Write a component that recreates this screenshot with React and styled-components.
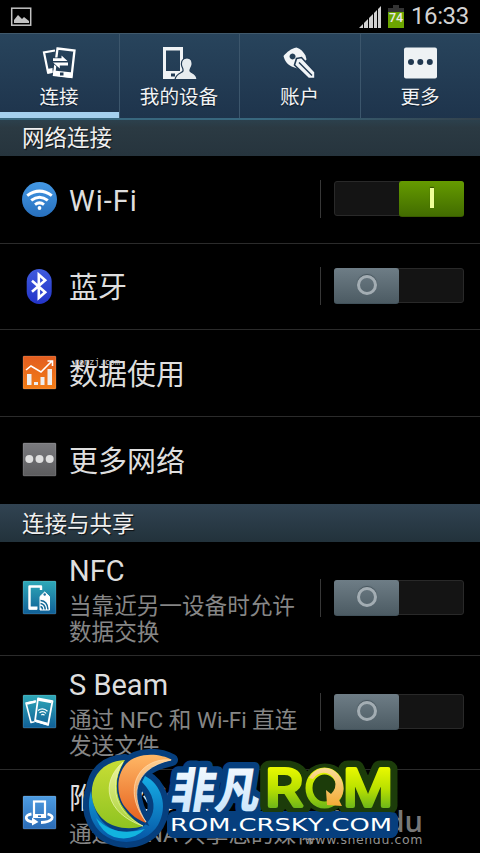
import React from 'react';
import styled, { createGlobalStyle } from 'styled-components';

const GlobalStyle = createGlobalStyle`
  * {
    box-sizing: border-box;
  }
  body {
    margin: 0;
    background: #000;
    overflow: hidden;
    font-family: Roboto, 'Noto Sans CJK SC', sans-serif;
    font-kerning: none;
  }
  svg {
    display: block;
    flex-shrink: 0;
  }
`;

const Screen = styled.div`
  position: relative;
  width: 480px;
  height: 853px;
  overflow: hidden;
  background: #000;
`;

const StatusBar = styled.header`
  display: flex;
  align-items: center;
  height: 33px;
  padding: 0 11px 0 10px;
  color: #d2d2d2;
`;

const StatusRight = styled.div`
  display: flex;
  align-items: center;
  margin-left: auto;
`;

const Battery = styled.svg`
  margin-left: 7px;
`;

const Clock = styled.span`
  width: 58px;
  margin-left: 7px;
  font-size: 24px;
  line-height: 33px;
  letter-spacing: -0.4px;
  white-space: nowrap;
`;

const TabBar = styled.nav`
  display: grid;
  grid-template-columns: 120px 120px 121px 119px;
  height: 85px;
  border-top: 1px solid #40596c;
  background: linear-gradient(#28445c, #1e344c);
`;

const Tab = styled.div`
  display: flex;
  flex-direction: column;
  align-items: center;
  padding: 11px 1px 0 0;
  border-right: ${props => (props.$last ? 'none' : '1px solid #3c566c')};
  box-shadow: ${props => (props.$active ? 'inset 0 -6px #a5d0ee' : 'none')};
`;

const TabLabel = styled.span`
  margin-top: 5px;
  color: #f1f3f5;
  font-size: 19.6px;
  line-height: 26px;
  text-shadow: 0 1px 1px #0b1622;
`;

const SectionHeader = styled.h2`
  height: 38px;
  margin: 0;
  padding-left: 22px;
  background: ${props =>
    props.$glow
      ? 'linear-gradient(90deg, #38677e, #38677e 55%, #33414b) top / 100% 2px no-repeat, linear-gradient(#2c424f, #2b3a43 25%, #26343d)'
      : 'linear-gradient(#314352, #22323b)'};
  color: #f0f0f0;
  font-size: 22.5px;
  font-weight: 400;
  line-height: ${props => (props.$glow ? 41 : 40)}px;
  text-shadow: 1px 1px 1px #0c1013;
`;

const Row = styled.div`
  display: flex;
  align-items: center;
  height: ${props => props.$height}px;
  padding: 0 16px 0 22px;
  border-bottom: ${props => (props.$last ? 'none' : '1px solid #2b2b2b')};
`;

const RowIcon = styled.div`
  padding-bottom: ${props => (props.$raised ? 2 : 0)}px;
`;

const RowText = styled.div`
  width: 240px;
  margin-left: 12px;
  white-space: nowrap;
`;

const Title = styled.div`
  color: #dedede;
  font-size: 29px;
  line-height: 34px;
  padding-top: 3px;
  letter-spacing: ${props => props.$spacing || 0}px;
`;

const Summary = styled.div`
  color: #868686;
  font-size: 22.6px;
  line-height: 26.5px;
  margin-top: 6px;
`;

const SwitchArea = styled.div`
  display: flex;
  align-items: center;
  height: 38px;
  margin: 0 0 1px auto;
  padding: 0 0 2px 13px;
  border-left: 1px solid #373737;
`;

const Track = styled.div`
  display: flex;
  justify-content: ${props => (props.$on ? 'flex-end' : 'flex-start')};
  width: 130px;
  height: 35px;
  border: 1px solid #292929;
  border-radius: 3px;
  background: #141414;
`;

const Thumb = styled.div`
  display: flex;
  align-items: center;
  justify-content: center;
  width: 65px;
  height: 36px;
  margin: -1px;
  border-radius: 3px;
  border-bottom: 1px solid ${props => (props.$on ? '#3a5a00' : '#42525b')};
  background: ${props =>
    props.$on ? 'linear-gradient(#659b00, #426c00)' : 'linear-gradient(#6e7d86, #4c5b63)'};
`;

const OnMark = styled.span`
  width: 4px;
  height: 20px;
  margin-bottom: 1px;
  background: #efff98;
  box-shadow: 0 -1px 1px #355300;
`;

const OffMark = styled.span`
  width: 20px;
  height: 20px;
  margin-bottom: 1px;
  border: 3px solid #a3adb3;
  border-radius: 50%;
  box-shadow: 0 -1px 1px #44525a;
`;

const TinyMark = styled.span`
  position: absolute;
  left: 74px;
  top: 357px;
  color: #d0d0d0;
  font: 8.5px/10px 'DejaVu Sans Mono', monospace;
`;

const SiteMark = styled.div`
  position: absolute;
  right: 57px;
  top: 804px;
  color: #777;
  text-align: right;
`;

const SiteName = styled.div`
  font: 600 29px/34px 'Open Sans', sans-serif;
`;

const SiteUrl = styled.div`
  margin-top: -6px;
  color: #919191;
  font: 12.5px/16px 'DejaVu Sans', sans-serif;
  letter-spacing: 0.6px;
`;

const LogoOverlay = styled.div`
  position: absolute;
  left: 75px;
  top: 740px;
`;

const Icon = ({ children }) => (
  <svg width="35" height="35" viewBox="0 0 35 35">{children}</svg>
);

const Gradient = ({ id, from, to }) => (
  <linearGradient id={id} x1="0" y1="0" x2="0" y2="1">
    <stop stopColor={from} />
    <stop offset="1" stopColor={to} />
  </linearGradient>
);

const Tile = ({ id, from, to, children }) => (
  <Icon>
    <defs><Gradient id={id} from={from} to={to} /></defs>
    <rect x="1" y="1" width="33" height="33" rx="1" fill={`url(#${id})`} stroke="#fff" strokeOpacity=".17" />
    {children}
  </Icon>
);

const WifiIcon = () => (
  <Icon>
    <defs><Gradient id="wifi" from="#4398e5" to="#2870bd" /></defs>
    <circle cx="17.5" cy="17.5" r="17.5" fill="url(#wifi)" />
    <g fill="none" stroke="#fff" strokeWidth="3">
      <path d="M5.2 13.6q12.3-9 24.6 0M9.2 18.4q8.3-6.4 16.6 0M13 22.6q4.5-3.5 9 0" />
    </g>
    <circle cx="17.5" cy="26" r="1.9" fill="#fff" />
  </Icon>
);

const BluetoothIcon = () => (
  <Icon>
    <defs><Gradient id="bluetooth" from="#3f5bdd" to="#2334c9" /></defs>
    <rect x="4.7" width="25" height="35" rx="12.5" fill="url(#bluetooth)" />
    <path d="M10 11.8l13.2 11.4-6.4 5.6V5.6l6.4 5.6-13.2 11.6" fill="none" stroke="#fff" strokeWidth="2.6" />
  </Icon>
);

const DataIcon = () => (
  <Tile id="data" from="#e25d20" to="#f37d16">
    <path d="M4 15l5-4 10 6L30 6M25.5 6H30.5V11" fill="none" stroke="#fff" strokeWidth="1.6" />
    <path d="M5 19h4.500v11H5zM12 27h4v3h-4zM18.500 22h4v8h-4zM25.500 14H30v16h-4.500z" fill="#eee" />
  </Tile>
);

const DotsIcon = () => (
  <Tile id="dots" from="#7a7a7e" to="#5c5c5e">
    {[7.3, 17.5, 27.7].map(x => <circle key={x} cx={x} cy="17" r="4" fill="#dedede" />)}
  </Tile>
);

const NfcIcon = () => (
  <Tile id="nfc" from="#2fa9b8" to="#105f97">
    <path d="M19 10V6.500H7.500v22H15" fill="none" stroke="#fff" strokeWidth="2.400" strokeLinejoin="round" />
    <path d="M7 26.500h8.500v3H7z" fill="#fff" />
    <path d="M18 16.500l4.700-4.500 4.800 4.500V30H18z" fill="#fff" stroke="#fff" strokeLinejoin="round" />
    <circle cx="22.700" cy="14.500" r="1.200" fill="#1a6c9b" />
    <g fill="none" stroke="#126896" strokeWidth="1.500">
      <path d="M18.500 20.500q7 .5 7.500 9M18.500 23.500q4.500.5 4.700 6M18.500 26.500q2 .5 2 3" />
    </g>
  </Tile>
);

const BeamIcon = () => (
  <Tile id="beam" from="#2fa9b8" to="#105f97">
    <g fill="none" stroke="#fff" strokeWidth="1.600" strokeLinejoin="round">
      <path d="M14 7L4 9l5 19.500 3.500-.8" />
      <path d="M5 9.500l8.500-1.800" strokeWidth="2.400" />
      <path d="M16 4.500l14.500 2.700L26 31l-13-4z" strokeWidth="1.800" />
      <path d="M16 5.600l13.500 2.500M13 26.500l12.500 3.500" strokeWidth="2.400" />
      <path d="M16 16.500q5-3.500 9.500.8M17.500 18.800q3.500-2.500 6.500.5M19.300 21q1.700-1.200 3.200.2" strokeWidth="1.200" />
    </g>
  </Tile>
);

const NearbyIcon = () => (
  <Tile id="nearby" from="#4d9ce2" to="#2a6bb5">
    <path d="M9.500 19C2 20 2.500 26 11 27M25.500 19C34 21 31 27 19 27.500" fill="none" stroke="#fff" strokeWidth="2.800" />
    <path d="M10 22.500l6.500 4.500-6.500 3.500z" fill="#fff" />
    <rect x="12" y="6.500" width="11" height="15" fill="none" stroke="#fff" strokeWidth="2.200" />
    <path d="M11 19h13v4H11z" fill="#fff" />
    <path d="M16 21.200h3" stroke="#2a6bb5" strokeWidth="1.500" />
  </Tile>
);

const ConnectTabIcon = () => (
  <Icon>
    <path d="M13 5.500L2 7.500l4 19.700 4.500-.7" fill="none" stroke="#fff" strokeWidth="2.200" />
    <path d="M5 24l5.500-1v5l-5 1z" fill="#fff" />
    <path d="M15.500 3.500l17 2L29.500 32l-17.500-2z" fill="none" stroke="#fff" strokeWidth="2.300" />
    <path d="M11.500 25.500l19.500 2-1 5.500-19-2.500z" fill="#fff" />
    <path d="M10 12.500h9V9.500l7.500 6.500v1H27v4.500h-8v3.500l-9.500-7.500z" fill="#223c55" />
    <path d="M11 13.200h8.500V10.500l6 5.500H11zM26 17.500H11l6.800 6v-3H26z" fill="#fff" />
    <rect x="18" y="27.500" width="3.500" height="3" fill="#213a53" />
  </Icon>
);

const DeviceTabIcon = () => (
  <Icon>
    <path fillRule="evenodd" d="M1 2h20v32H1zM4 5.500v20.500h14V5.500z" fill="#f0f3f5" />
    <rect x="9" y="28.500" width="4" height="3" fill="#213a53" />
    <path d="M25 13c-4 0-6 3-5.500 7 .3 2.500 2 3.500 1.500 6-.5 2-7 2-8 8.500h22c0-6.500-6-6.500-7-8.500-.4-2.200 1.500-3.500 2-6 .5-4-1-7-5-7z" fill="#e7ecef" stroke="#213a53" strokeWidth="1.200" />
  </Icon>
);

const KeyTabIcon = () => (
  <Icon>
    <path fillRule="evenodd" d="M14.500 2.500c4 1 7 4.500 9 8l1 4-9 9-4.500-1.500C6 20 3 17 1.500 11 5 7 9 3.500 14.500 2.500zM10.500 8.500a3 3 0 1 0 .1 0" fill="#f2f5f7" />
    <path d="M14.500 13.500l5-1L33 27v6.500h-6.500L12.500 20z" fill="#f0f4f7" stroke="#213a53" strokeWidth="1.600" />
    <path d="M17 17.500l13 13" stroke="#213a53" strokeWidth="1.400" />
  </Icon>
);

const MoreTabIcon = () => (
  <Icon>
    <rect x="1" y="2.500" width="33" height="31" rx="2" fill="#eef2f4" />
    {[8, 17.3, 26.8].map(x => <circle key={x} cx={x} cy="17" r="3" fill="#203850" />)}
  </Icon>
);

const ringPath = 'M145 776C161 784 169 806 158 825 144 848 106 848 93 822 88 812 88 801 91 791 93 806 98 829 124 832 149 833 166 806 142 782z';
const greenPath = 'M125 760C82 762 83 816 115 826 124 829 134 829 143 826 120 812 108 787 125 760z';
const orangePath = 'M172 760C160 753 137 752 126 764 115 777 117 797 125 807 131 815 138 820 146 823 136 806 131 790 140 777 148 766 160 763 172 760z';

const CrskyLogo = () => (
  <svg width="330" height="113" viewBox="75 740 330 113">
    <defs>
      <Gradient id="orange" from="#ffb765" to="#e5601d" />
      <Gradient id="orangeLight" from="#ffcf90" to="#f08a42" />
      <Gradient id="green" from="#c8dd35" to="#8fc321" />
      <Gradient id="greenLight" from="#eef3a0" to="#a9d236" />
      <Gradient id="cyan" from="#16aee6" to="#0655a5" />
      <Gradient id="ice" from="#ffffff" to="#c2e2fb" />
      <linearGradient id="lime" gradientUnits="userSpaceOnUse" x1="0" y1="768" x2="0" y2="810">
        <stop stopColor="#e8f800" />
        <stop offset=".5" stopColor="#b8e000" />
        <stop offset="1" stopColor="#66b21c" />
      </linearGradient>
      <Gradient id="arrow" from="#fbdc98" to="#f3aa35" />
    </defs>
    <g fill="#063f7e" stroke="#063f7e" strokeWidth="12" strokeLinejoin="round">
      <path d={ringPath} />
      <path d={greenPath} />
      <path d={orangePath} />
      <path d="M94 800q15 40 52 24-15 18-35 11z" />
    </g>
    <rect x="167" y="811" width="231" height="27" rx="8" fill="#063f7e" />
    <path d={ringPath} fill="url(#cyan)" />
    <path d="M96 818q18 20 49 11-13 13-31 8-12-4-18-19z" fill="#12b4df" />
    <path d={greenPath} fill="url(#green)" />
    <path d="M123 762C100 782 105 813 143 826 116 813 108 787 123 762z" fill="url(#greenLight)" stroke="#edf7b0" strokeWidth=".7" />
    <path d={orangePath} fill="url(#orange)" stroke="#063f7e" strokeWidth="3" paintOrder="stroke" />
    <path d="M171 760C141 757 120 787 146 822 131 799 131 769 171 760z" fill="url(#orangeLight)" stroke="#ffe0b8" strokeWidth=".7" />
    <text transform="translate(169 808) skewX(-9)" textLength="89" lengthAdjust="spacingAndGlyphs" fontFamily="'Noto Sans CJK SC', sans-serif" fontWeight="900" fontSize="48" fill="url(#ice)" stroke="#063f7e" strokeWidth="13" strokeLinejoin="round" paintOrder="stroke">非凡</text>
    <g fontFamily="Inter, sans-serif" fontSize="50" fontWeight="400" fill="none" stroke="#1c3c0a" strokeWidth="17" strokeLinejoin="round">
      <text x="265" y="806" textLength="38" lengthAdjust="spacingAndGlyphs">R</text>
      <circle cx="325" cy="788" r="16" />
      <text x="343" y="806" textLength="50" lengthAdjust="spacingAndGlyphs">M</text>
    </g>
    <circle cx="324.5" cy="788" r="12" fill="#1c3c0a" />
    <g fontFamily="Inter, sans-serif" fontSize="50" fontWeight="400" fill="url(#lime)" stroke="url(#lime)" strokeWidth="4" strokeLinejoin="round">
      <text x="265" y="806" textLength="38" lengthAdjust="spacingAndGlyphs">R</text>
      <text x="343" y="806" textLength="50" lengthAdjust="spacingAndGlyphs">M</text>
    </g>
    <ellipse cx="324.5" cy="788" rx="15.500" ry="17" fill="none" stroke="url(#lime)" strokeWidth="7" />
    <path d="M309 778C318 762 339 766 343 784q2 10-4 16l3 6-15-1-1-15 5 4q6-6 4-13c-4-10-16-11-22-2z" fill="url(#arrow)" />
    <rect x="167" y="812" width="231" height="26" rx="8" fill="#063f7e" />
    <text x="170" y="831" textLength="222" lengthAdjust="spacingAndGlyphs" fontFamily="'DejaVu Sans', sans-serif" fontSize="18" fill="#fff">ROM.CRSKY.COM</text>
  </svg>
);

const tabs = [
  { label: '连接', icon: <ConnectTabIcon /> },
  { label: '我的设备', icon: <DeviceTabIcon /> },
  { label: '账户', icon: <KeyTabIcon /> },
  { label: '更多', icon: <MoreTabIcon /> },
];

const networkItems = [
  { title: 'Wi-Fi', icon: <WifiIcon />, on: true, height: 88, spacing: 1 },
  { title: '蓝牙', icon: <BluetoothIcon />, on: false, height: 86 },
  { title: '数据使用', icon: <DataIcon />, height: 87, raised: true },
  { title: '更多网络', icon: <DotsIcon />, height: 87, raised: true, last: true },
];

const sharingItems = [
  { title: 'NFC', summary: ['当靠近另一设备时允许', '数据交换'], icon: <NfcIcon />, on: false, height: 114, raised: true },
  { title: 'S Beam', summary: ['通过 NFC 和 Wi-Fi 直连', '发送文件'], icon: <BeamIcon />, on: false, height: 114, raised: true },
  { title: '附近的设备', summary: ['通过 DLNA 共享您的媒体'], icon: <NearbyIcon />, height: 87, raised: true, last: true },
];

const Switch = ({ on }) => (
  <SwitchArea>
    <Track $on={on}>
      <Thumb $on={on}>{on ? <OnMark /> : <OffMark />}</Thumb>
    </Track>
  </SwitchArea>
);

const SettingRow = ({ item }) => (
  <Row $height={item.height} $last={item.last}>
    <RowIcon $raised={item.raised}>{item.icon}</RowIcon>
    <RowText>
      <Title $spacing={item.spacing}>{item.title}</Title>
      {item.summary && (
        <Summary>
          {item.summary.map(line => <div key={line}>{line}</div>)}
        </Summary>
      )}
    </RowText>
    {item.on !== undefined && <Switch on={item.on} />}
  </Row>
);

const App = () => (
  <Screen>
    <GlobalStyle />
    <StatusBar>
      <svg width="22" height="20" viewBox="0 0 22 20">
        <rect x="1.7" y="1.2" width="19" height="17" fill="none" stroke="#c3c3c3" strokeWidth="1.5" />
        <path d="M4 16v-3l4-5 4 4 2-2 5 4v2z" fill="#c3c3c3" />
      </svg>
      <StatusRight>
        <svg width="22" height="22" viewBox="0 0 22 22">
          <path d="M0 22l4-4v4zM5 17l4-4v9H5zM10 12l4-4v14h-4zM15 7l3-3v18h-3zM19 3l3-3v22h-3z" fill="#d0d0d0" />
        </svg>
        <Battery width="16" height="24" viewBox="0 0 16 24">
          <path d="M5 0h6v3h5v5H0V3h5z" fill="#343434" />
          <path d="M0 7h16v16H0z" fill="#6ba500" />
          <text x="8" y="17" textAnchor="middle" fontFamily="Roboto, sans-serif" fontSize="12.5" fontWeight="500" fill="#e8e8e8">74</text>
        </Battery>
        <Clock>16:33</Clock>
      </StatusRight>
    </StatusBar>
    <TabBar>
      {tabs.map((tab, index) => (
        <Tab key={tab.label} $active={index === 0} $last={index === tabs.length - 1}>
          {tab.icon}
          <TabLabel>{tab.label}</TabLabel>
        </Tab>
      ))}
    </TabBar>
    <SectionHeader $glow>网络连接</SectionHeader>
    {networkItems.map(item => <SettingRow key={item.title} item={item} />)}
    <SectionHeader>连接与共享</SectionHeader>
    {sharingItems.map(item => <SettingRow key={item.title} item={item} />)}
    <TinyMark>romzj.com</TinyMark>
    <SiteMark>
      <SiteName>shendu</SiteName>
      <SiteUrl>www.shendu.com</SiteUrl>
    </SiteMark>
    <LogoOverlay><CrskyLogo /></LogoOverlay>
  </Screen>
);

export default App;
